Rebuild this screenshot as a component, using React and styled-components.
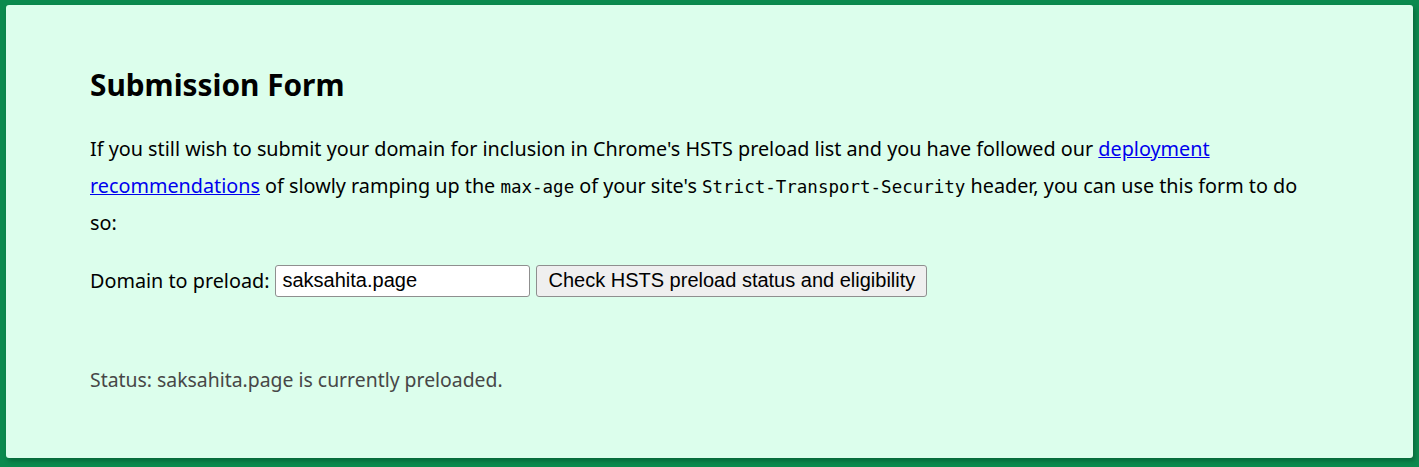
import styled, { createGlobalStyle } from "styled-components"

const GlobalStyle = createGlobalStyle`
  html, body {
    margin: 0;
    padding: 0;
    background: #0b8a4e;
  }
  body {
    font-family: "Noto Sans", "Open Sans", sans-serif;
  }
`

const Frame = styled.div`
  width: 1419px;
  height: 467px;
  box-sizing: border-box;
  padding: 5px 6px 9px 6px;
  background: #0b8a4e;
`

const Panel = styled.div`
  height: 100%;
  box-sizing: border-box;
  background: #dcfeec;
  border-radius: 3px;
  box-shadow: 2px 3px 4px rgba(0, 40, 20, 0.35);
  padding: 60px 90px 0 84px;
  color: #000;
`

const Title = styled.h2`
  margin: 0 0 26px 0;
  font-size: 29.8px;
  font-weight: 700;
  line-height: 40px;
`

const Text = styled.p`
  margin: 0 0 23px 0;
  font-size: 19.8px;
  line-height: 36.5px;
  max-width: 1232px;

  & a {
    color: #0000ee;
    text-decoration: underline;
  }
`

const Code = styled.code`
  font-family: "DejaVu Sans Mono", "Liberation Mono", monospace;
  font-size: 17.5px;
`

const Row = styled.form`
  display: flex;
  align-items: center;
  gap: 6px;
  font-size: 19.8px;
  height: 32px;
  margin-bottom: 69px;
`

const Input = styled.input`
  width: 255px;
  height: 32px;
  box-sizing: border-box;
  border: 1px solid #8f8f8f;
  border-radius: 3px;
  padding: 1px 6px;
  font-family: "Liberation Sans", Arial, sans-serif;
  font-size: 20px;
  background: #fff;
  color: #000;
`

const Button = styled.button`
  height: 32px;
  box-sizing: border-box;
  border: 1px solid #8f8f8f;
  border-radius: 3px;
  padding: 1px 11px;
  background: #efefef;
  font-family: "Liberation Sans", Arial, sans-serif;
  font-size: 20px;
  color: #000;
`

const Status = styled.div`
  font-size: 19.4px;
  color: #474747;
`

export default function App() {
  return (
    <>
      <GlobalStyle />
      <Frame>
        <Panel>
          <Title>Submission Form</Title>
          <Text>
            If you still wish to submit your domain for inclusion in Chrome's HSTS preload list and you have followed our{" "}
            <a href="#deployment">deployment recommendations</a> of slowly ramping up the <Code>max-age</Code> of your
            site's <Code>Strict-Transport-Security</Code> header, you can use this form to do so:
          </Text>
          <Row onSubmit={(e) => e.preventDefault()}>
            <label htmlFor="domain">Domain to preload:</label>
            <Input id="domain" defaultValue="saksahita.page" />
            <Button type="submit">Check HSTS preload status and eligibility</Button>
          </Row>
          <Status>Status: saksahita.page is currently preloaded.</Status>
        </Panel>
      </Frame>
    </>
  )
}
